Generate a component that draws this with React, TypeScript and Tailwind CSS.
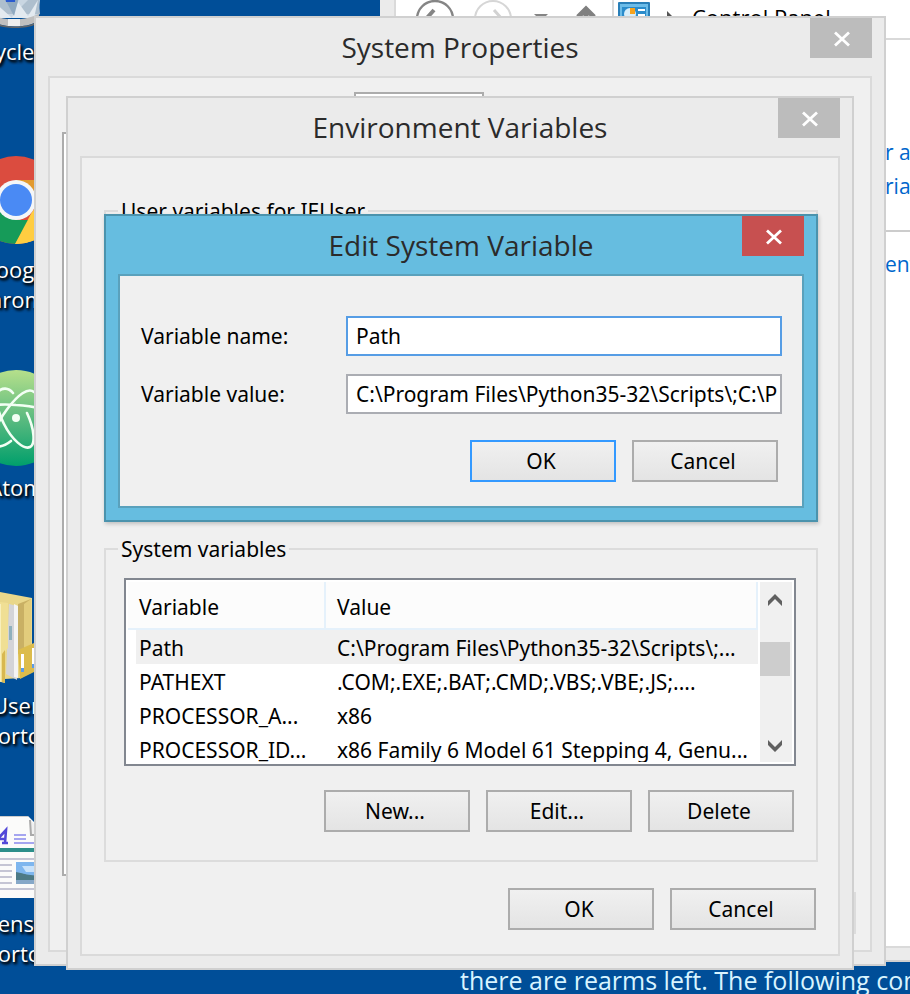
import type { ReactNode } from "react";

const uiFont = "font-['Noto_Sans',sans-serif]";
const titleFont = "font-['Open_Sans','Noto_Sans',sans-serif]";

const variables: [string, string][] = [
  ["Path", "C:\\Program Files\\Python35-32\\Scripts\\;..."],
  ["PATHEXT", ".COM;.EXE;.BAT;.CMD;.VBS;.VBE;.JS;...."],
  ["PROCESSOR_A...", "x86"],
  ["PROCESSOR_ID...", "x86 Family 6 Model 61 Stepping 4, Genu..."],
];

function CloseIcon() {
  return (
    <svg width="18" height="16" viewBox="0 0 18 16" fill="none" stroke="#fff" strokeWidth="2.8">
      <path d="M2 1.5 L16 14.5 M16 1.5 L2 14.5" />
    </svg>
  );
}

function PushButton({ children, primary = false }: { children: ReactNode; primary?: boolean }) {
  return (
    <button
      type="button"
      className={`h-[42px] w-[146px] border-2 bg-linear-to-b from-[#f0f0f0] to-[#e4e4e4] pr-1 text-[21px] leading-6 text-black ${
        primary ? "border-[#3399ff]" : "border-[#acacac]"
      }`}
    >
      {children}
    </button>
  );
}

function Dialog({
  title,
  place,
  frame,
  panel,
  close,
  children,
}: {
  title: string;
  place: string;
  frame: string;
  panel: string;
  close: string;
  children: ReactNode;
}) {
  return (
    <section aria-label={title} className={`absolute flex flex-col border-2 ${place} ${frame}`}>
      <header className="grid h-[58px] grid-cols-[74px_1fr_74px] items-center">
        <h2 className={`col-start-2 text-center text-[28px] leading-9 text-[#2b2b2b] ${titleFont}`}>{title}</h2>
        <button
          type="button"
          aria-label={`Close ${title}`}
          className={`flex h-10 w-[62px] items-center justify-center self-start pt-0.5 pl-0.5 ${close}`}
        >
          <CloseIcon />
        </button>
      </header>
      <div className={`mx-3 mb-3 flex-1 border-2 bg-[#f0f0f0] ${panel}`}>{children}</div>
    </section>
  );
}

function DesktopLabel({ children }: { children: ReactNode }) {
  return (
    <span
      className={`text-center text-[22px] leading-[30px] whitespace-nowrap text-white [text-shadow:1px_2px_3px_#000,2px_2px_3px_#000] ${titleFont}`}
    >
      {children}
    </span>
  );
}

function RecycleBinIcon() {
  return (
    <svg width="80" height="90" viewBox="-24 -62 80 90">
      <path d="M-14 -56 H46 L38 18 H-6 Z" fill="#c9d6e2" />
      <path d="M-8 -30 L16 12 L38 -10 L40 14 H-6 Z" fill="#aebfce" />
      <path d="M-6 2 L12 18 L18 2 L28 16 L38 0 L34 18 H-4 Z" fill="#e3eaf0" />
      <path d="M0 -10 L14 16 L20 -6 Z" fill="#8fa9c0" />
      <path d="M3 -16 L16 -12 L15 2 L6 2 Z" fill="#2a5bd0" />
      <path d="M-8 15 C4 21 28 21 40 13 L36 22 C26 28 4 28 -6 22 Z" fill="#bfbfbf" />
      <path d="M-6 22 C4 28 28 28 36 22 L34 25 C26 29 6 29 -4 25 Z" fill="#666" />
      <path d="M8 19 H20 V26 H8 Z" fill="#eee" />
    </svg>
  );
}

function ChromeIcon() {
  return (
    <svg width="88" height="88" viewBox="-28 156 88 88">
      <clipPath id="chrome-disc">
        <circle cx="16" cy="200" r="44" />
      </clipPath>
      <g clipPath="url(#chrome-disc)">
        <rect x="-28" y="156" width="88" height="88" fill="#db4c3f" />
        <path d="M16 180 H62 V246 H14 L34 209 Z" fill="#ffcd41" />
        <path d="M16 180 H62 V190 L34 192 Z" fill="#e29a2f" />
        <path d="M-24 180 L-2 210 L16 220 H29 L14 246 H-30 Z" fill="#169b59" />
        <path d="M32 212 L38 209 V246 H14 Z" fill="#ffcd41" />
      </g>
      <circle cx="16" cy="200" r="20" fill="#f4f6f8" />
      <circle cx="16" cy="200" r="16" fill="#4a8af4" />
    </svg>
  );
}

function AtomIcon() {
  return (
    <svg width="96" height="96" viewBox="-32 370 96 96" fill="none">
      <linearGradient id="atom-green" x1="0" y1="0" x2="0" y2="1">
        <stop offset="0" stopColor="#b6e08b" />
        <stop offset="0.5" stopColor="#5dbb80" />
        <stop offset="1" stopColor="#009f6b" />
      </linearGradient>
      <circle cx="16" cy="418" r="48" fill="url(#atom-green)" />
      <g stroke="#f2fff4" strokeWidth="2.6" strokeLinecap="round">
        <path d="M13 393 C8 387 2 388 -1 391 C-6 398 -2 412 4 424 C12 440 24 450 30 447 C36 444 34 428 27 413" />
        <path d="M34 392 C28 387 18 395 8 408 C-4 424 -12 442 -6 445 C-1 448 6 445 11 441" />
        <path d="M-22 410 C-10 404 6 404 16 405 C34 406 48 410 54 416" />
      </g>
      <circle cx="16" cy="418" r="4" fill="#f2fff4" />
    </svg>
  );
}

function FolderIcon() {
  return (
    <svg width="80" height="94" viewBox="-24 590 80 94">
      <path d="M-16 594 L0 592 L32 598 L32 646 L22 678 L-16 680 Z" fill="#e9d78b" />
      <path d="M18 604 L31 599 L31 648 L18 654 Z" fill="#c9b064" />
      <path d="M24 604 L31 599 L31 646 L24 648 Z" fill="#e2cc7c" />
      <path d="M9 604 L17 606 L17 680 L6 674 Z" fill="#d4d4d8" />
      <path d="M14 604 L18 606 L18 678 L14 677 Z" fill="#f4f4f4" />
      <path d="M9 626 h3 v14 h-3 Z" fill="#8fb0bd" />
      <path d="M18 650 L34 643 L34 672 L20 679 Z" fill="#dcbc4c" />
      <path d="M21 654 h3 v14 h-3 Z M32 648 h2 v18 h-2 Z" fill="#fff" />
      <path d="M21 668 h3 v4 h-3 Z M32 664 h2 v4 h-2 Z" fill="#5b9be8" />
      <path d="M-16 600 L8 603 L8 648 L5 652 L5 683 L-16 678 Z" fill="#f0df94" />
      <path d="M-4 604 L1 604 L1 682 L-4 680 Z" fill="#f8efbc" />
      <path d="M2 654 L5 650 V683 L2 682 Z" fill="#d8b850" />
    </svg>
  );
}

function DocumentIcon() {
  return (
    <svg width="64" height="86" viewBox="-16 814 64 86" fill="none">
      <path d="M-16 816 H28 L46 834 V898 H-16 Z" fill="#fbfbfa" />
      <path d="M-16 816.5 H28" stroke="#ccc" />
      <path d="M30 820 L31 835 H46" fill="#f0f0f0" stroke="#aaa" strokeWidth="2" />
      <path d="M-6 843 L6 830 L5 843 M-1 839 H6 M2 843 H8" stroke="#5248d8" strokeWidth="2.6" />
      <path d="M14 835 H26 M14 839 H26 M14 843 H40" stroke="#a5a5f0" strokeWidth="2" />
      <path d="M-16 850 H48" stroke="#2d8f8a" strokeWidth="4" />
      <path d="M-16 859 H48 M-16 865 H12 M-16 871 H12 M-16 877 H12 M-16 883 H12 M-16 889 H48" stroke="#c5c5d4" strokeWidth="2" />
      <path d="M16 862 H48 V884 H16 Z" fill="#7eb6ee" />
      <path d="M22 866 H36 V872 H26 Z" fill="#c8e2fa" />
      <path d="M16 872 C22 873 28 876 48 876 V884 H16 Z" fill="#4d7a86" />
      <path d="M16 880 H48 V884 H16 Z" fill="#86a8c8" />
    </svg>
  );
}

function Desktop() {
  return (
    <div className="absolute top-[-62px] left-[-64px] flex w-40 flex-col">
      <div className="flex flex-col items-center gap-2 pb-[90px]">
        <RecycleBinIcon />
        <DesktopLabel>Recycle Bin</DesktopLabel>
      </div>
      <div className="flex flex-col items-center gap-2.5 pb-14">
        <ChromeIcon />
        <DesktopLabel>
          Google
          <br />
          Chrome
        </DesktopLabel>
      </div>
      <div className="flex flex-col items-center gap-1.5 pb-[88px]">
        <AtomIcon />
        <DesktopLabel>Atom</DesktopLabel>
      </div>
      <div className="flex flex-col items-center gap-1.5 pb-16">
        <FolderIcon />
        <DesktopLabel>
          User
          <br />
          Shortcut
        </DesktopLabel>
      </div>
      <div className="flex flex-col items-center gap-2">
        <DocumentIcon />
        <DesktopLabel>
          Sense
          <br />
          Shortcut
        </DesktopLabel>
      </div>
    </div>
  );
}

function SearchResult({ before, after }: { before: string; after: string }) {
  return (
    <a href="#result" className="flex whitespace-pre">
      <span className="w-[489px] shrink-0 text-right">{before}</span>
      <span>{after}</span>
    </a>
  );
}

function ControlPanel() {
  return (
    <section
      aria-label="Control Panel"
      className={`absolute top-0 -right-4 left-[380px] flex h-[962px] flex-col border-b-2 border-[#d0d0d0] bg-[#ebebeb] pb-3 pl-3.5 ${titleFont}`}
    >
      <div className="flex-1 border-b-2 border-l-2 border-[#dadada] bg-white">
        <nav className="flex h-10 items-center border-b-2 border-[#d9d9d9] pl-5">
          <svg width="196" height="38" viewBox="416 0 196 38" fill="none" className="shrink-0">
            <circle cx="435" cy="19" r="18" stroke="#858585" strokeWidth="2.4" />
            <path d="M444 19 H426 M434 10 L426 19 L434 28" stroke="#858585" strokeWidth="4" />
            <circle cx="493" cy="19" r="18" stroke="#d6d6d6" strokeWidth="2" />
            <path d="M484 19 H502 M494 10 L502 19 L494 28" stroke="#d2d2d2" strokeWidth="3" />
            <path d="M534 14 H548 L541 21 Z" fill="#858585" />
            <path d="M578 17 L586 9 L594 17 M586 10 V28" stroke="#808080" strokeWidth="5" />
          </svg>
          <div className="flex h-full shrink-0 items-center border-l-2 border-[#dadada] pl-1">
            <svg width="32" height="32" viewBox="0 0 32 32" className="mb-0.5 shrink-0">
              <rect width="32" height="32" rx="1" fill="#2a7fb8" />
              <rect x="2" y="2" width="28" height="28" fill="#6cbce8" />
              <rect x="4" y="5" width="24" height="22" fill="#2b8ccb" />
              <circle cx="12" cy="12" r="6" fill="#d8eefa" />
              <path d="M12 6 L17 6 L17 12 L12 12 Z" fill="#f6a21c" />
              <path d="M20 8 H27 M20 13 H27" stroke="#fff" strokeWidth="2" />
            </svg>
            <svg width="10" height="12" viewBox="0 0 10 12" className="mx-4 mb-1 shrink-0">
              <path d="M1 0 L7 6 L1 12 Z" fill="#555" />
            </svg>
            <span className="pb-1 text-[22px] leading-7 whitespace-nowrap text-black">Control Panel</span>
          </div>
        </nav>
        <div className="flex h-[192px] flex-col justify-start gap-1.5 border-b-2 border-[#ccc] pt-[98px] text-[21px] leading-7 text-[#0066cc]">
          <SearchResult before="Edit environment variables for you" after="r account" />
          <SearchResult before="Edit the system environment va" after="riables" />
        </div>
        <div className="pt-[18px] text-[21px] leading-7 text-[#0066cc]">
          <SearchResult before="Search Windows Help and Support for " after="env" />
        </div>
      </div>
    </section>
  );
}

function SystemProperties() {
  return (
    <Dialog
      title="System Properties"
      place="top-4 right-6 left-[34px]"
      frame="border-[#d0d0d0] bg-[#ebebeb]"
      panel="border-[#dadada]"
      close="bg-[#bcbcbc]"
    >
      <div className="flex flex-col items-stretch pt-3.5 pr-3 pb-4 pl-3">
        <div className="ml-[292px] h-10 w-[130px] border-2 border-b-0 border-[#acacac] bg-white" />
        <div className="mr-4 h-[744px] border-2 border-[#acacac] bg-white" />
        <div className="mt-4 mr-0.5 h-[42px] w-[146px] self-end border-2 border-[#dcdcdc]" />
      </div>
    </Dialog>
  );
}

function VariableTable() {
  return (
    <div className="mt-[17px] mr-2 ml-1.5 flex h-[188px] border-2 border-[#828790] bg-white p-0.5">
      <div className="min-w-0 flex-1 overflow-hidden">
        <table className="w-full table-fixed border-separate border-spacing-0 text-left text-[21px] whitespace-nowrap text-black">
          <thead>
            <tr className="h-12">
              <th
                scope="col"
                className="w-[198px] border-r-2 border-b-2 border-[#e5f1fb] bg-[#fcfcfc] p-0 pt-1 pl-[11px] leading-7 font-normal"
              >
                Variable
              </th>
              <th
                scope="col"
                className="border-r-2 border-b-2 border-[#e5f1fb] bg-[#fcfcfc] p-0 pt-1 pl-[11px] leading-7 font-normal"
              >
                Value
              </th>
            </tr>
          </thead>
          <tbody>
            {variables.map(([name, value], i) => (
              <tr key={name} className="leading-7">
                <td className="p-0 pl-2">
                  <div className={`h-[34px] pt-1 pl-[3px] ${i === 0 ? "bg-[#f0f0f0]" : ""}`}>{name}</div>
                </td>
                <td className="p-0">
                  <div className={`h-[34px] pt-1 pl-[11px] ${i === 0 ? "bg-[#f0f0f0]" : ""}`}>{value}</div>
                </td>
              </tr>
            ))}
          </tbody>
        </table>
      </div>
      <div className="ml-0.5 flex w-8 flex-col bg-[#f0f0f0]">
        <button type="button" aria-label="Scroll up" className="flex h-[34px] w-[30px] items-center justify-center pt-0.5">
          <svg width="14" height="12" viewBox="0 0 14 12" fill="#606060">
            <path d="M0 12 V7 L7 0 L14 7 V12 L7 5 Z" />
          </svg>
        </button>
        <div className="mt-[26px] h-[34px] w-[30px] bg-[#cdcdcd]" />
        <button type="button" aria-label="Scroll down" className="mt-auto flex h-8 w-[30px] items-center justify-center">
          <svg width="14" height="12" viewBox="0 0 14 12" fill="#606060">
            <path d="M0 0 V5 L7 12 L14 5 V0 L7 7 Z" />
          </svg>
        </button>
      </div>
    </div>
  );
}

function EnvironmentVariables() {
  return (
    <Dialog
      title="Environment Variables"
      place="top-24 right-14 left-[66px]"
      frame="border-[#d0d0d0] bg-[#ebebeb]"
      panel="border-[#dadada]"
      close="bg-[#bcbcbc]"
    >
      <div className="flex flex-col pt-[41px] pr-5 pb-6 pl-[22px]">
        <fieldset className="h-[321px] border-2 border-[#dcdcdc] px-3">
          <legend className="px-[3px] text-[21px] leading-6 text-black">User variables for IEUser</legend>
        </fieldset>
        <fieldset className="mt-[17px] border-2 border-[#dcdcdc] px-3 pb-7">
          <legend className="px-[3px] text-[21px] leading-6 text-black">System variables</legend>
          <VariableTable />
          <div className="mt-6 flex justify-end gap-4 pr-2.5">
            <PushButton>New...</PushButton>
            <PushButton>Edit...</PushButton>
            <PushButton>Delete</PushButton>
          </div>
        </fieldset>
        <div className="mt-[26px] flex justify-end gap-4 pr-0.5">
          <PushButton>OK</PushButton>
          <PushButton>Cancel</PushButton>
        </div>
      </div>
    </Dialog>
  );
}

function EditVariable() {
  const field = "h-10 w-full min-w-0 border-2 bg-white pl-2 text-[21px] leading-7 text-black outline-none";
  return (
    <Dialog
      title="Edit System Variable"
      place="top-[214px] right-[92px] left-[104px]"
      frame="border-[#4b93ad] bg-[#66bde0] shadow-[1px_2px_4px_rgba(0,0,0,0.2)]"
      panel="border-[#5aa1bc]"
      close="bg-[#c75050]"
    >
      <form className="pt-10 pr-5 pb-6 pl-[21px] text-[21px] leading-7 text-black">
        <div className="grid grid-cols-[205px_1fr] items-center gap-y-[18px]">
          <label htmlFor="variable-name">Variable name:</label>
          <input id="variable-name" type="text" defaultValue="Path" className={`border-[#569de5] ${field}`} />
          <label htmlFor="variable-value">Variable value:</label>
          <input
            id="variable-value"
            type="text"
            defaultValue={"C:\\Program Files\\Python35-32\\Scripts\\;C:\\P"}
            className={`border-[#abadb3] ${field}`}
          />
        </div>
        <div className="mt-[26px] flex justify-end gap-4 pr-1">
          <PushButton primary>OK</PushButton>
          <PushButton>Cancel</PushButton>
        </div>
      </form>
    </Dialog>
  );
}

export default function App() {
  return (
    <main className={`relative h-screen w-full overflow-hidden bg-[#004e98] ${uiFont}`}>
      <Desktop />
      <p className={`absolute top-[962px] left-[460px] text-[25px] leading-9 whitespace-nowrap text-[#d8f4ff] ${titleFont}`}>
        there are rearms left. The following commands
      </p>
      <ControlPanel />
      <SystemProperties />
      <EnvironmentVariables />
      <EditVariable />
    </main>
  );
}
